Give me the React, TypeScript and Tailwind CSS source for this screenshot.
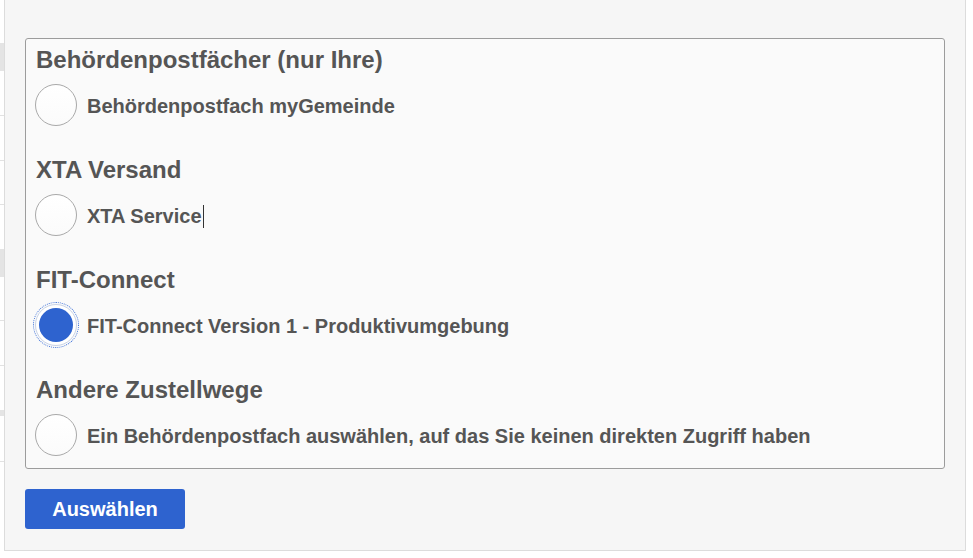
import React from 'react';

// ---------------------------------------------------------------------------
// Data
// ---------------------------------------------------------------------------

interface Section {
  title: string;
  label: string;
  checked?: boolean;
  caret?: boolean;
}

const sections: Section[] = [
  { title: 'Behördenpostfächer (nur Ihre)', label: 'Behördenpostfach myGemeinde' },
  { title: 'XTA Versand', label: 'XTA Service', caret: true },
  { title: 'FIT-Connect', label: 'FIT-Connect Version 1 - Produktivumgebung', checked: true },
  {
    title: 'Andere Zustellwege',
    label: 'Ein Behördenpostfach auswählen, auf das Sie keinen direkten Zugriff haben',
  },
];

// ---------------------------------------------------------------------------
// Radio
// ---------------------------------------------------------------------------

function Radio({ checked }: { checked?: boolean }) {
  if (checked) {
    return (
      <span className="relative flex h-[42px] w-[42px] shrink-0 items-center justify-center rounded-full border border-[#c9d3e6] bg-white outline-1 outline-offset-1 outline-dotted outline-[#3b6fd8]">
        <span className="h-[34px] w-[34px] rounded-full bg-[#2e63cf]" />
      </span>
    );
  }
  return (
    <span className="h-[42px] w-[42px] shrink-0 rounded-full border border-[#a9a9a9] bg-gradient-to-b from-white to-[#fbfbfb]" />
  );
}

// ---------------------------------------------------------------------------
// Left strip (edge of the page behind the dialog)
// ---------------------------------------------------------------------------

function EdgeStrip() {
  return (
    <div className="flex w-[4px] shrink-0 flex-col bg-white">
      <div className="h-[43px]" />
      <div className="h-[28px] bg-[#e4e4e4]" />
      <div className="h-[45px] border-b border-[#e2e2e2]" />
      <div className="h-[45px] border-b border-[#e2e2e2]" />
      <div className="h-[44px] border-b border-[#e2e2e2]" />
      <div className="h-[44px]" />
      <div className="h-[28px] bg-[#e4e4e4]" />
      <div className="h-[44px] border-b border-[#e2e2e2]" />
      <div className="h-[45px] border-b border-[#e2e2e2]" />
      <div className="h-[44px]" />
      <div className="h-[6px] bg-[#e4e4e4]" />
      <div className="h-[46px] border-b border-[#e2e2e2]" />
    </div>
  );
}

// ---------------------------------------------------------------------------
// App
// ---------------------------------------------------------------------------

export default function App() {
  return (
    <div
      className="flex h-[558px] w-[973px] bg-white text-[#555]"
      style={{ fontFamily: '"Liberation Sans", Arial, sans-serif' }}
    >
      <EdgeStrip />

      <div className="flex h-[551px] w-[962px] flex-col border-x border-b border-[#dcdcdc] bg-[#f6f6f6] pl-[20px] pt-[38px]">
        <fieldset className="w-[920px] rounded-[3px] border border-[#9c9c9c] bg-[#fafafa] pb-[12px] pl-[10px] pt-[7px]">
          {sections.map((s, i) => (
            <div key={s.title} className={i < sections.length - 1 ? 'mb-[30px]' : ''}>
              <h2 className="text-[24px] font-bold leading-[28px]">{s.title}</h2>
              <label className="mt-[10px] -ml-px flex items-center gap-[10px]">
                <Radio checked={s.checked} />
                <span className="flex items-center pt-[2px] text-[20px] font-bold leading-[24px]">
                  {s.label}
                  {s.caret && <span className="ml-px inline-block h-[23px] w-px bg-[#333]" />}
                </span>
              </label>
            </div>
          ))}
        </fieldset>

        <button className="mt-[20px] h-[40px] w-[160px] rounded-[3px] bg-[#2e63cf] text-[20px] font-bold text-white">
          Auswählen
        </button>
      </div>
    </div>
  );
}
